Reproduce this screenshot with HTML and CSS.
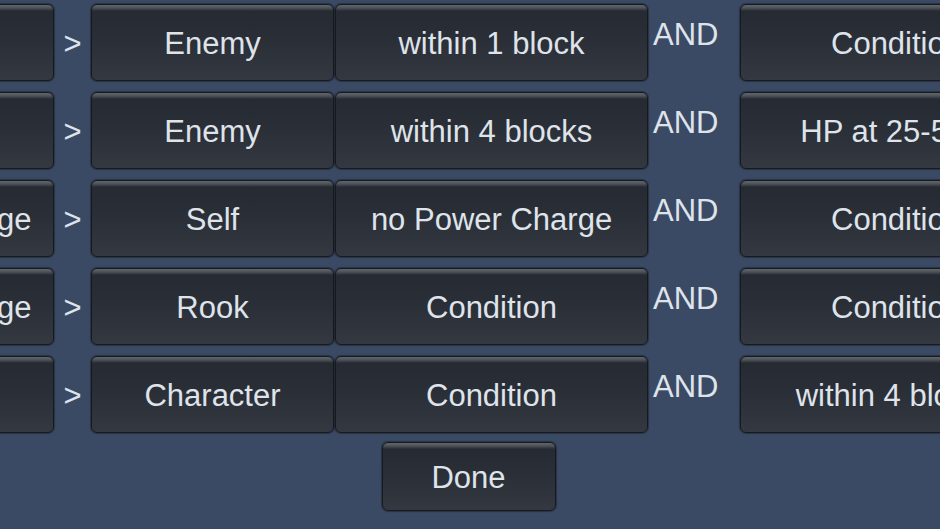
FILE: index.html
```html
<!DOCTYPE html>
<html lang="en">
<head>
<meta charset="utf-8">
<title>Rules</title>
<link rel="stylesheet" href="styles.css">
</head>
<body>
<div class="screen">
  <div class="rules">
    <div class="rule">
      <div class="btn w-sm">Attack</div>
      <div class="arrow">&gt;</div>
      <div class="btn w-sm">Enemy</div>
      <div class="btn w-lg">within 1 block</div>
      <div class="and">AND</div>
      <div class="btn w-lg">Condition</div>
    </div>
    <div class="rule">
      <div class="btn w-sm">Attack</div>
      <div class="arrow">&gt;</div>
      <div class="btn w-sm">Enemy</div>
      <div class="btn w-lg">within 4 blocks</div>
      <div class="and">AND</div>
      <div class="btn w-lg">HP at 25-50%</div>
    </div>
    <div class="rule">
      <div class="btn w-sm">Power Charge</div>
      <div class="arrow">&gt;</div>
      <div class="btn w-sm">Self</div>
      <div class="btn w-lg">no Power Charge</div>
      <div class="and">AND</div>
      <div class="btn w-lg">Condition</div>
    </div>
    <div class="rule">
      <div class="btn w-sm">Power Charge</div>
      <div class="arrow">&gt;</div>
      <div class="btn w-sm">Rook</div>
      <div class="btn w-lg">Condition</div>
      <div class="and">AND</div>
      <div class="btn w-lg">Condition</div>
    </div>
    <div class="rule">
      <div class="btn w-sm">Move</div>
      <div class="arrow">&gt;</div>
      <div class="btn w-sm">Character</div>
      <div class="btn w-lg">Condition</div>
      <div class="and">AND</div>
      <div class="btn w-lg">within 4 blocks</div>
    </div>
  </div>
  <div class="footer">
    <div class="btn done">Done</div>
  </div>
</div>
</body>
</html>
```

FILE: styles.css
```css
html, body {
  margin: 0;
  padding: 0;
  background: #3b4a64;
  overflow: hidden;
}
body {
  width: 940px;
  height: 529px;
  font-family: "Liberation Sans", Arial, sans-serif;
  font-size: 31px;
  color: #dfe3ea;
}
.screen {
  padding-top: 4px;
  display: flex;
  flex-direction: column;
}
.rules {
  display: flex;
  flex-direction: column;
  gap: 11px;
}
.rule {
  display: flex;
  align-items: stretch;
  height: 77px;
  margin-left: -189px;
  white-space: nowrap;
}
.btn {
  box-sizing: border-box;
  flex: none;
  display: flex;
  align-items: center;
  justify-content: center;
  overflow: hidden;
  border: 1px solid #16191e;
  border-radius: 6px;
  background: linear-gradient(to bottom,
    #62666d 0px, #4c5057 3px, #262a32 6px,
    #2a2e37 45%, #343841 100%);
  box-shadow: 0 0 1px 1px rgba(20, 24, 32, 0.45);
  padding-top: 2px;
}
.w-sm { width: 243px; }
.w-lg { width: 313px; margin-left: 1px; }
.arrow {
  flex: none;
  width: 37px;
  display: flex;
  align-items: center;
  justify-content: center;
  padding-top: 2px;
}
.and {
  flex: none;
  box-sizing: border-box;
  width: 92px;
  padding: 13px 0 0 5px;
  align-self: flex-start;
}
.and + .w-lg { margin-left: 0; }
.footer {
  display: flex;
  justify-content: center;
  margin-top: 9px;
  padding-right: 3px;
}
.done {
  width: 174px;
  height: 69px;
}
```
